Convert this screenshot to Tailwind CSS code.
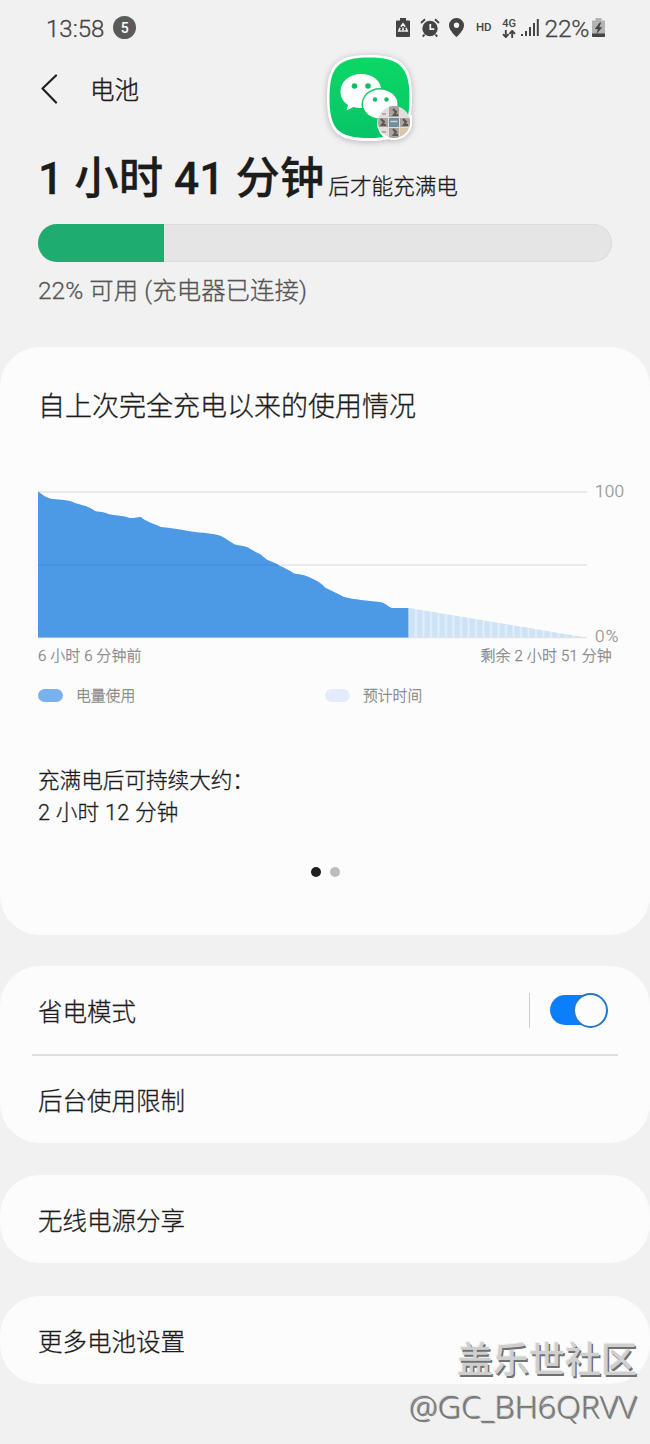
<!DOCTYPE html>
<html lang="zh-CN">
<head>
<meta charset="utf-8">
<title>电池</title>
<script src="https://cdn.jsdelivr.net/npm/@tailwindcss/browser@4"></script>
</head>
<body class="bg-[#f1f1f1]">
<div class="relative flex h-[1444px] w-[650px] flex-col overflow-hidden bg-[#f1f1f1] font-[Roboto,'Noto_Sans_CJK_SC',sans-serif] font-light text-[#1c1c1c] [-webkit-text-stroke:0.3px]">

  <!-- Status bar -->
  <header class="flex h-14 shrink-0 items-center justify-between pr-[45px] pl-[46px] text-[#444]">
    <div class="flex items-center gap-[9px]">
      <span class="pt-[2px] text-[24px] leading-none">13:58</span>
      <span class="-mt-px flex size-[23px] items-center justify-center rounded-full bg-[#5a5a5a] text-[14px] leading-none font-medium text-white [-webkit-text-stroke:0]">5</span>
    </div>
    <div class="flex items-center">
      <svg class="h-[20px] w-[14px]" viewBox="0 0 14 20" fill="#444"><path d="M4 0h6v2.500h3a1 1 0 0 1 1 1V18a1 1 0 0 1-1 1H1a1 1 0 0 1-1-1V3.500a1 1 0 0 1 1-1h3z"/><path d="M4.800 8.800 7 5.800l2.200 3M4 9.800 2.800 13h3M10 9.800l1.200 3.200h-3M7 9.500V14" fill="none" stroke="#f1f1f1" stroke-width="1.600"/></svg>
      <svg class="ml-[10px] h-[20px] w-[20px]" viewBox="0 0 20 20"><circle cx="10" cy="10.500" r="7.700" fill="#444"/><path d="M1 5 5 1.300M19 5l-4-3.700M4.500 16.500 2.800 18.700M15.500 16.500l1.700 2.200" stroke="#444" stroke-width="1.900" fill="none"/><path d="M10.300 6v5.200h4" stroke="#f1f1f1" stroke-width="1.800" fill="none"/></svg>
      <svg class="ml-[9px] h-[20px] w-[15px]" viewBox="0 0 15 20"><path fill="#444" fill-rule="evenodd" d="M7.500 0A7.400 7.400 0 0 0 0 7.500C0 12.500 7.500 19 7.500 19s7.500-6.500 7.500-11.500A7.400 7.400 0 0 0 7.500 0zm0 4.500a2.700 2.700 0 1 1 0 5.400 2.700 2.700 0 0 1 0-5.400z"/></svg>
      <span class="ml-[12px] text-[11.500px] leading-none font-medium [-webkit-text-stroke:0]">HD</span>
      <div class="ml-[10px] flex w-[15px] flex-col items-center gap-px">
        <span class="text-[11px] leading-[10px] font-medium [-webkit-text-stroke:0]">4G</span>
        <svg class="h-[8px] w-[14px]" viewBox="0 0 14 8" fill="none" stroke="#444" stroke-width="1.900"><path d="M3.800 0v7M1 4.200l2.800 2.900 2.800-2.900M10.200 8V1M7.400 3.800 10.200.9 13 3.800"/></svg>
      </div>
      <svg class="ml-[4px] h-[18px] w-[18px]" viewBox="0 0 18 18" fill="#444"><path d="M0 15h2v2H0zM4 12h2v5H4zM8 8h2v9H8zM12 4h2v13h-2zM15.800 0h2v17h-2z"/></svg>
      <span class="ml-[6px] pt-[2px] text-[24.500px] leading-none tracking-[-0.3px]">22%</span>
      <svg class="ml-[3px] h-[20px] w-[13px]" viewBox="0 0 13 20"><path d="M3.500 0h6v2.500H13V19H0V2.500h3.500z" fill="#b3b3b3"/><path d="M0 15.500h13V18a1 1 0 0 1-1 1H1a1 1 0 0 1-1-1z" fill="#444"/><path d="M7.800 4.500 2.800 11h3l-1.300 5 5.800-6.800H7.200l2-4.700z" fill="#444"/></svg>
    </div>
  </header>

  <!-- Title bar -->
  <div class="flex h-[66px] shrink-0 items-center pl-[40px]">
    <svg class="h-[30px] w-[18px]" viewBox="0 0 18 30" fill="none" stroke="#202020" stroke-width="2.200" stroke-linecap="round" stroke-linejoin="round"><path d="M16 1.500 2.500 14.500 16 28.500"/></svg>
    <h1 class="ml-[32px] pt-[5px] text-[24.500px] leading-none [-webkit-text-stroke:0.4px]">电池</h1>
  </div>

  <!-- Charge summary -->
  <section class="flex h-[225px] shrink-0 flex-col px-[38px]">
    <div class="flex h-[102px] items-baseline pt-[29px] whitespace-nowrap">
      <span class="text-[44.400px] leading-[56px] font-medium [-webkit-text-stroke:0.3px]">1 小时 41 分钟</span>
      <span class="ml-[4px] text-[21.600px] leading-none">后才能充满电</span>
    </div>
    <div class="h-[38px] shrink-0 overflow-hidden rounded-full bg-[#e5e5e5] ring-1 ring-[#dcdcdc] ring-inset">
      <div class="h-full bg-[#1eac71]" style="width:22%"></div>
    </div>
    <p class="mt-[12px] text-[24.400px] leading-[34px] tracking-[0.08px] text-[#555]">22% 可用 (充电器已连接)</p>
  </section>

  <!-- Usage card -->
  <section class="flex h-[588px] shrink-0 flex-col rounded-[40px] bg-[#fcfcfc]">
    <h2 class="mt-[42px] ml-[38px] text-[27px] leading-[36px]">自上次完全充电以来的使用情况</h2>
    <div class="mt-[55px] flex h-[164px] pl-[38px]">
      <svg class="h-[164px] w-[550px] shrink-0" viewBox="38 480 550 164">
        <defs>
          <pattern id="stripes" x="409" y="0" width="7.500" height="10" patternUnits="userSpaceOnUse"><rect width="7.500" height="10" fill="#e1effb"/><rect x="0.500" width="5.500" height="10" fill="#cde2f5"/></pattern>
        </defs>
        <path d="M38 492H587M38 565H587M38 637.500H587" stroke="#e1e3e5" stroke-width="1.600"/>
        <path d="M409 608 583 637H409z" fill="url(#stripes)"/>
        <path d="M38 491.500C43 495 47 498.500 53 499C61 499.800 68 499.500 75 503C83 505.500 88 506 95 511C102 512.500 105 512 108 514C116 515.500 123 515.500 130 518C136 518 139 516.500 141 517C145 521 152 523 161 527C170 527.800 180 529.500 191 531.500C202 533 213 533 221 536C227 539 230 542 235 544.500C240 545.500 244 546 248 547.500C254 551 257 553 261 554.500C264 558 268 560.500 275 563C283 568 290 570 294 573.500C301 574 308 576 313 579C319 582 322 584 325 587.500C331 590.500 337 593 344 597C354 599.500 367 600.500 380 602C386 603.500 387 606 392 608H408.500V637.500H38z" fill="#4c99e5"/>
        <path d="M38 565H278" stroke="#4790d9" stroke-width="1.300"/>
      </svg>
      <div class="ml-[7px] flex flex-col justify-between text-[17.200px] leading-[20px] text-[#999]">
        <span class="mt-px tracking-[0.2px]">100</span><span class="-mb-[2px] tracking-[1.200px]">0%</span>
      </div>
    </div>
    <div class="flex h-[24px] items-center justify-between pr-[38px] pl-[38px] text-[15px] leading-none text-[#888]">
      <span class="tracking-[0.1px]">6 小时 6 分钟前</span><span class="tracking-[0.15px]">剩余 2 小时 51 分钟</span>
    </div>
    <div class="mt-[17px] grid grid-cols-[287px_1fr] pl-[38px] text-[14.800px] leading-[22px] text-[#888]">
      <div class="flex items-center"><i class="-mt-[2px] h-[13px] w-[25px] rounded-full bg-[#7ab1ec]"></i><span class="ml-[13px]">电量使用</span></div>
      <div class="flex items-center"><i class="-mt-[2px] h-[13px] w-[25px] rounded-full bg-[#e4ecfb]"></i><span class="ml-[13px]">预计时间</span></div>
    </div>
    <p class="mt-[58px] ml-[38px] text-[21.600px] leading-[31.500px]">充满电后可持续大约：<br><span class="tracking-[0.25px]">2 小时 12 分钟</span></p>
    <div class="mt-[39px] flex justify-center gap-[9px]">
      <i class="size-[10px] rounded-full bg-[#202020]"></i><i class="size-[10px] rounded-full bg-[#bcbcbc]"></i>
    </div>
  </section>

  <!-- Power saving and background limits -->
  <section class="mt-[31px] h-[177px] shrink-0 rounded-[40px] bg-[#fcfcfc] text-[24.500px] leading-none">
    <div class="mx-[32px] flex h-[90px] items-center border-b-2 border-[#dfdfdf] pl-[6px]">
      <span class="pt-[6px]">省电模式</span>
      <i class="ml-auto h-[35px] w-[1.500px] bg-[#cfcfcf]"></i>
      <div class="mr-[10px] ml-[20px] flex h-[35px] w-[58px] items-center">
        <div class="flex h-[30px] w-[54px] items-center rounded-full bg-[#0b7efc]">
          <div class="ml-[23px] size-[35px] shrink-0 rounded-full border-2 border-[#2678c9] bg-[#fcfcfc]"></div>
        </div>
      </div>
    </div>
    <div class="flex h-[87px] items-center pt-[6px] pl-[38px]">后台使用限制</div>
  </section>

  <section class="mt-[32px] flex h-[88px] shrink-0 items-center rounded-[40px] bg-[#fcfcfc] pt-[6px] pl-[38px] text-[24.500px] leading-none">无线电源分享</section>
  <section class="mt-[33px] flex h-[88px] shrink-0 items-center rounded-[40px] bg-[#fcfcfc] pt-[6px] pl-[38px] text-[24.500px] leading-none">更多电池设置</section>

  <!-- Floating chat bubble -->
  <svg class="absolute top-[46px] left-[320px] h-[104px] w-[100px] drop-shadow-[0_1px_3px_rgba(0,0,0,0.25)]" viewBox="320 46 100 104">
    <defs><linearGradient id="green" x2="0" y2="1"><stop stop-color="#0bd865"/><stop offset="1" stop-color="#08c468"/></linearGradient><clipPath id="avatar"><circle cx="394" cy="122" r="16"/></clipPath></defs>
    <path d="M369 55C402 55 412 65 412 98S402 141 369 141 327 131 327 98 336 55 369 55z" fill="#fff"/>
    <path d="M369 57.500C400 57.500 409.500 67 409.500 98S400 138 369 138 329.500 129 329.500 98 338 57.500 369 57.500z" fill="url(#green)"/>
    <path d="M361 74c-12 0-20.500 8-20.500 17.500 0 6 3 10.500 7.500 13.500l-1.500 5.500 7-3.500c2.500.7 5 1 8 1 11 0 20-7 20-17S373 74 361 74z" fill="#fff"/>
    <circle cx="354.500" cy="86" r="2.800" fill="#10bf64"/><circle cx="368" cy="86" r="2.800" fill="#10bf64"/>
    <ellipse cx="380" cy="104.500" rx="18.500" ry="16.500" fill="#0ccb65"/>
    <path d="M380 89.500c-9.500 0-17 6.500-17 14.500s7.500 14.500 17 14.500c9.500 0 17.500-6.500 17.500-14.500s-8-14.500-17.500-14.500z" fill="#fff"/>
    <circle cx="375" cy="99.500" r="2.200" fill="#10bf64"/><circle cx="386.500" cy="99.500" r="2.200" fill="#10bf64"/>
    <path d="M378 118a17.500 17.500 0 0 0 5 18.500 18.500 18.500 0 0 0 29-11V115z" fill="#fff"/>
    <g clip-path="url(#avatar)"><path fill="#e2dedd" d="M378 106h34v34h-34z"/><path fill="#a9a39f" d="M389 106h10v11h-10zM378 118h10v9h-10zM400 118h10v9h-10zM389 128h10v11h-10z"/><path fill="#718e9c" d="M389 118h10v9h-10z"/><path fill="#d9c7aa" d="M400 128h10v10h-10z"/><path d="m393 109 3 3-2 3h4M381 119l3 3-2 3h4M403 119l3 3-2 3h4M393 129l3 3-2 3h4" fill="none" stroke="#65544f" stroke-width="2.200"/><path d="M390.500 121.500h7" stroke="#c8d8df" stroke-width="1.500"/><path d="M381 132h5M382 114h4" stroke="#a6706b" stroke-width="1"/></g>
  </svg>

  <!-- Community watermark -->
  <div class="absolute right-[13px] bottom-[18px] flex flex-col items-end whitespace-nowrap [-webkit-text-stroke:0]">
    <span class="text-[36px] leading-[44px] font-medium text-[#cfcfcf] [text-shadow:1.5px_1.5px_0_#707070,-1px_-1px_0_#eee]">盖乐世社区</span>
    <span class="mt-[3px] font-['Open_Sans',sans-serif] text-[32px] leading-[40px] font-light tracking-[0.15px] text-[#777] [text-shadow:-1px_-1px_0_#ddd,1px_1px_0_#888]">@GC_BH6QRVV</span>
  </div>
</div>
</body>
</html>
